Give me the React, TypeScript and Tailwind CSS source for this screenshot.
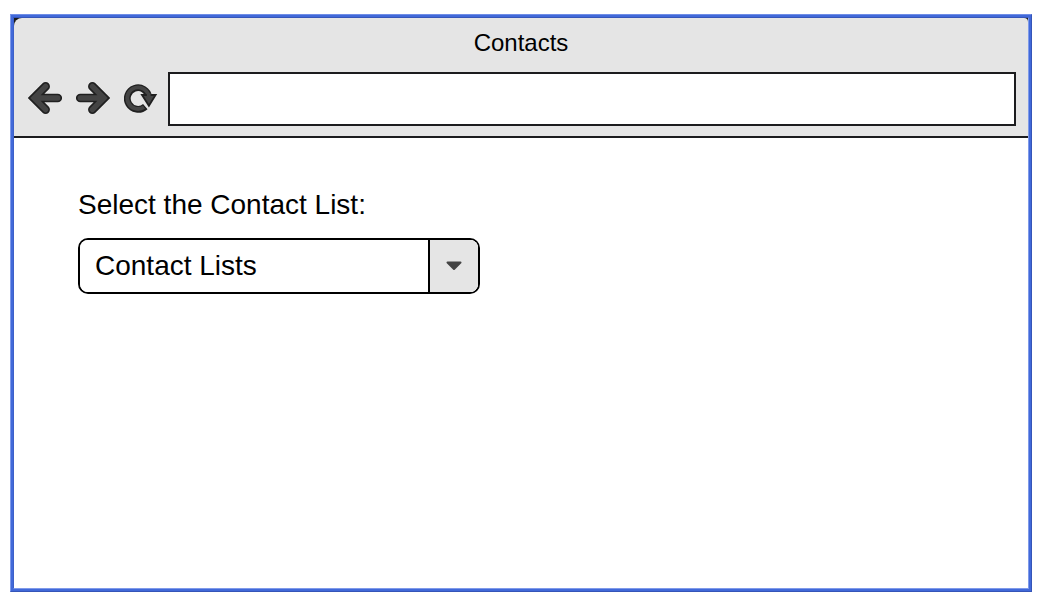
import { useState } from "react";

const arrowPath = "M45.6 86.4 L34 98 L45.6 109.6 M36 98 H57.7";

function ArrowIcon({ flipped = false }: { flipped?: boolean }) {
  return (
    <svg viewBox="28 82 34 34" className="size-full" fill="none" strokeLinecap="round" strokeLinejoin="miter" aria-hidden="true">
      <g transform={flipped ? "translate(90 0) scale(-1 1)" : undefined}>
        <path d={arrowPath} stroke="#202020" strokeWidth="8.7" />
        <path d={arrowPath} stroke="#444444" strokeWidth="5.4" />
      </g>
    </svg>
  );
}

function ReloadIcon() {
  return (
    <svg viewBox="124 82 34 34" className="size-full" fill="none" strokeLinejoin="miter" aria-hidden="true">
      <path d="M145.3 106.6 A10.8 10.8 0 1 1 148.8 97" stroke="#202020" strokeWidth="6.8" />
      <path d="M144 107.2 A10.8 10.8 0 1 1 148.8 97" stroke="#444444" strokeWidth="3.8" />
      <path d="M142 95 H155.6 L148.9 105.8 Z" fill="#444444" stroke="#202020" strokeWidth="1.8" />
      <path d="M146.8 93 V97.5 H150.6 V93 Z" fill="#444444" />
    </svg>
  );
}

export default function App() {
  const [address, setAddress] = useState("");
  const [list, setList] = useState("");

  return (
    <div className="flex min-h-screen bg-white py-[14px] pr-2 pl-[10px] font-['Liberation_Sans',Arial,sans-serif] text-black">
      <div className="flex grow border border-t-[#6f8de6] border-r-[#3555b8] border-b-[#3555b8] border-l-[#7f9aea]">
        <div className="flex grow border-2 border-[#4169d9]">
          <main className="flex grow flex-col border border-t-[#3555b8] border-r-[#7f9aea] border-b-[#7f9aea] border-l-[#3d60c8]">
            <div className="bg-[#1a1a1a]">
              <header className="rounded-tl-lg rounded-tr-sm border-b-2 border-[#1c1c1e] bg-[#e5e5e5] pt-[7px] pb-[10px]">
                <h1 className="text-center text-2xl leading-9">Contacts</h1>
                <nav className="mt-[11px] flex items-center pr-3 pl-[14px]" aria-label="Browser">
                  <div className="flex gap-[14px]">
                    <button type="button" aria-label="Back" className="size-[34px]">
                      <ArrowIcon />
                    </button>
                    <button type="button" aria-label="Forward" className="size-[34px]">
                      <ArrowIcon flipped />
                    </button>
                    <button type="button" aria-label="Reload" className="size-[34px]">
                      <ReloadIcon />
                    </button>
                  </div>
                  <input
                    type="text"
                    aria-label="Address"
                    value={address}
                    onChange={(e) => setAddress(e.target.value)}
                    className="ml-[10px] h-[54px] min-w-0 grow border-2 border-[#1c1c1e] bg-white px-3 text-2xl outline-none"
                  />
                </nav>
              </header>
            </div>
            <section className="flex flex-col gap-[15px] px-16 pt-[49px]">
              <label htmlFor="contact-list" className="text-[28px] leading-9">
                Select the Contact List:
              </label>
              <div className="grid h-14 w-full max-w-[402px] overflow-hidden rounded-[10px] border-2 border-black">
                <select
                  id="contact-list"
                  value={list}
                  onChange={(e) => setList(e.target.value)}
                  className="col-start-1 row-start-1 w-full appearance-none bg-white pr-14 pl-[15px] text-[28px] outline-none"
                >
                  <option value="">Contact Lists</option>
                </select>
                <span className="pointer-events-none col-start-1 row-start-1 flex w-[50px] items-center justify-center justify-self-end border-l-2 border-black bg-[#e5e5e5]">
                  <svg viewBox="0 0 16 10" className="h-[10px] w-4" aria-hidden="true">
                    <path d="M1.5 1.5 H14.5 L8 8 Z" fill="#444444" stroke="#444444" strokeWidth="2" strokeLinejoin="round" />
                  </svg>
                </span>
              </div>
            </section>
          </main>
        </div>
      </div>
    </div>
  );
}
